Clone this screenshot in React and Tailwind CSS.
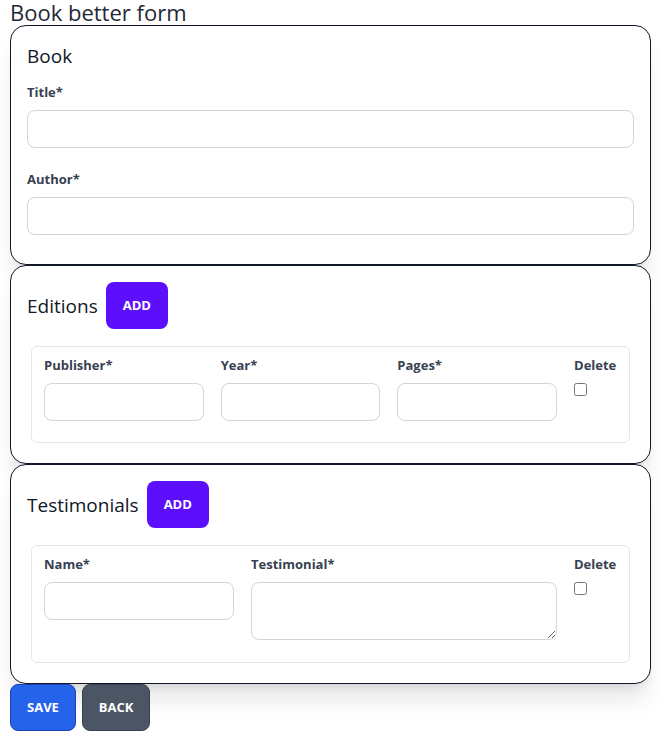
import React from "react";

const font = { fontFamily: '"Open Sans", "Noto Sans", sans-serif' };

const Field = ({ label, className = "", textarea = false }) => (
  <div className={`mb-3 ${className}`}>
    <label className="block text-[13px] leading-5 font-bold text-[#374151] mb-2">
      {label}
    </label>
    {textarea ? (
      <textarea className="block w-full h-[58px] border border-[#d1d5db] rounded-lg bg-white" />
    ) : (
      <input
        type="text"
        className="block w-full h-[38px] border border-[#d1d5db] rounded-lg bg-white"
      />
    )}
  </div>
);

const DeleteBox = () => (
  <div className="mb-3 w-[43px] shrink-0">
    <label className="block text-[13px] leading-5 font-bold text-[#374151] mb-2">
      Delete
    </label>
    <input type="checkbox" className="block m-0 mt-[3px] w-[13px] h-[13px]" />
  </div>
);

const SectionHeader = ({ title }) => (
  <div className="flex items-center gap-2 h-[47px]">
    <h2 className="text-[19px] leading-7 text-[#111827]">{title}</h2>
    <button className="h-[47px] px-[17px] rounded-lg bg-[#5b0ffb] text-white text-[13px] font-bold">
      ADD
    </button>
  </div>
);

const Card = ({ children }) => (
  <div className="border border-[#111827] rounded-2xl p-4 bg-white shadow-xl">
    {children}
  </div>
);

export default function App() {
  return (
    <div className="px-[10px] bg-white min-h-screen" style={font}>
      <h1 className="text-[22px] leading-[25px] text-[#1f2937]">Book better form</h1>

      <Card>
        <h2 className="text-[19px] leading-7 text-[#111827]">Book</h2>
        <div className="mt-[12px] pb-[13px] flex flex-col gap-[21px]">
          <div>
            <label className="block text-[13px] leading-5 font-bold text-[#374151] mb-[8px]">
              Title*
            </label>
            <input
              type="text"
              className="block w-full h-[38px] border border-[#d1d5db] rounded-lg"
            />
          </div>
          <div>
            <label className="block text-[13px] leading-5 font-bold text-[#374151] mb-2">
              Author*
            </label>
            <input
              type="text"
              className="block w-full h-[38px] border border-[#d1d5db] rounded-lg"
            />
          </div>
        </div>
      </Card>

      <Card>
        <SectionHeader title="Editions" />
        <div className="mt-[17px] mx-1 mb-1 border border-[#e5e7eb] rounded-md px-3 pt-2 pb-[9px] flex gap-[17px]">
          <Field label="Publisher*" className="flex-1" />
          <Field label="Year*" className="flex-1" />
          <Field label="Pages*" className="flex-1" />
          <DeleteBox />
        </div>
      </Card>

      <Card>
        <SectionHeader title="Testimonials" />
        <div className="mt-[17px] mx-1 mb-1 border border-[#e5e7eb] rounded-md px-3 pt-2 pb-[10px] flex gap-[17px]">
          <Field label="Name*" className="w-[190px] shrink-0" />
          <Field label="Testimonial*" className="flex-1" textarea />
          <DeleteBox />
        </div>
      </Card>

      <div className="flex gap-[6px]">
        <button className="h-[47px] px-[16px] rounded-lg bg-[#2563eb] border border-[#1e40af] text-white text-[13px] font-bold">
          SAVE
        </button>
        <button className="h-[47px] px-[16px] rounded-lg bg-[#4b5563] border border-[#374151] text-white text-[13px] font-bold">
          BACK
        </button>
      </div>
    </div>
  );
}
